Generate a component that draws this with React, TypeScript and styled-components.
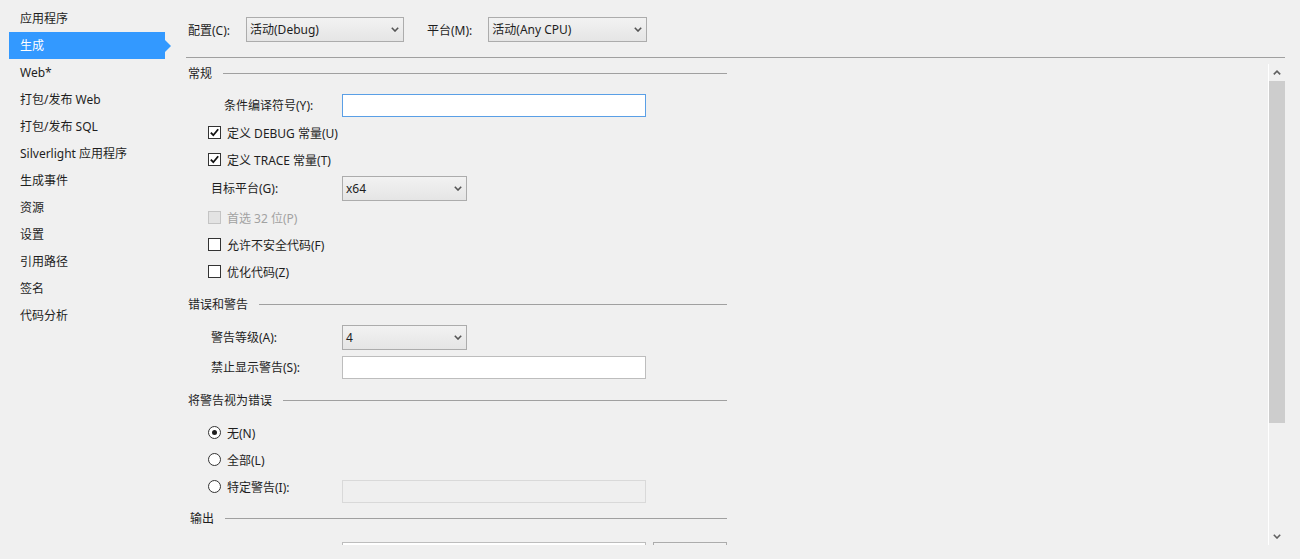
import React from 'react';
import styled, { createGlobalStyle, css } from 'styled-components';

const GlobalStyle = createGlobalStyle`
  html, body { margin: 0; padding: 0; background: #f0f0f0; }
  body {
    font-family: "Noto Sans", "Noto Sans CJK SC", sans-serif;
    font-size: 12px;
    color: #1e1e1e;
  }
  #root { height: 559px; }
`;

const Page = styled.div`
  display: flex;
  width: 1300px;
  height: 559px;
  overflow: hidden;
  background: #f0f0f0;
`;

const Sidebar = styled.nav`
  width: 186px;
  flex: none;
  box-sizing: border-box;
  padding: 5px 0 0 9px;
  display: flex;
  flex-direction: column;
`;

const NavItem = styled.div<{ $active?: boolean }>`
  position: relative;
  width: 156px;
  height: 27px;
  box-sizing: border-box;
  padding-left: 11px;
  display: flex;
  align-items: center;
  line-height: 16px;
  white-space: nowrap;
  ${(p) =>
    p.$active &&
    css`
      background: #3399ff;
      color: #fff;
      &::after {
        content: '';
        position: absolute;
        left: 100%;
        top: 50%;
        margin-top: -6px;
        border-left: 6px solid #3399ff;
        border-top: 6px solid transparent;
        border-bottom: 6px solid transparent;
      }
    `}
`;

const Main = styled.div`
  flex: 1;
  min-width: 0;
  display: flex;
  flex-direction: column;
  padding-right: 15px;
`;

const TopBar = styled.div`
  height: 57px;
  box-sizing: border-box;
  padding: 17px 0 0 2px;
  display: flex;
  align-items: flex-start;
  gap: 23px;
`;

const TopField = styled.label`
  display: flex;
  align-items: center;
  gap: 16px;
  height: 25px;
  white-space: nowrap;
`;

const Rule = styled.div`
  height: 1px;
  background: #a0a0a0;
  flex: none;
`;

const ScrollArea = styled.div`
  margin-top: 6px;
  height: 481px;
  display: flex;
`;

const Content = styled.div`
  flex: 1;
  min-width: 0;
  overflow: hidden;
`;

const Section = styled.div`
  width: 541px;
  display: flex;
  flex-direction: column;
`;

const Header = styled.div<{ $mt: number; $indent?: number }>`
  display: flex;
  align-items: center;
  gap: 11px;
  height: 18px;
  margin-top: ${(p) => p.$mt}px;
  padding-left: ${(p) => p.$indent ?? 2}px;
  white-space: nowrap;
  &::after {
    content: '';
    flex: 1;
    height: 1px;
    background: #a0a0a0;
  }
`;

const Row = styled.div<{ $h: number; $mt: number; $top?: boolean }>`
  display: flex;
  align-items: ${(p) => (p.$top ? 'flex-start' : 'center')};
  height: ${(p) => p.$h}px;
  margin-top: ${(p) => p.$mt}px;
  white-space: nowrap;
`;

const FieldLabel = styled.div<{ $indent: number }>`
  width: 156px;
  box-sizing: border-box;
  padding-left: ${(p) => p.$indent}px;
  line-height: 16px;
  flex: none;
`;

const ChoiceLine = styled.label<{ $disabled?: boolean; $w?: number }>`
  display: flex;
  align-items: center;
  gap: 6px;
  padding-left: 22px;
  height: 27px;
  box-sizing: border-box;
  width: ${(p) => (p.$w ? `${p.$w}px` : 'auto')};
  flex: none;
  color: ${(p) => (p.$disabled ? '#a2a2a2' : '#1e1e1e')};
`;

const Box = styled.span<{ $disabled?: boolean }>`
  width: 13px;
  height: 13px;
  box-sizing: border-box;
  border: 1px solid ${(p) => (p.$disabled ? '#c4c4c4' : '#333')};
  background: ${(p) => (p.$disabled ? '#e3e3e3' : '#fff')};
  display: flex;
  align-items: center;
  justify-content: center;
  flex: none;
`;

const Radio = styled.span<{ $on?: boolean }>`
  width: 13px;
  height: 13px;
  box-sizing: border-box;
  border: 1px solid #333;
  border-radius: 50%;
  background: #fff;
  display: flex;
  align-items: center;
  justify-content: center;
  flex: none;
  &::after {
    content: '';
    width: 5px;
    height: 5px;
    border-radius: 50%;
    background: ${(p) => (p.$on ? '#1e1e1e' : 'transparent')};
  }
`;

const TextBox = styled.div<{ $w: number; $focus?: boolean; $disabled?: boolean; $mt?: number }>`
  width: ${(p) => p.$w}px;
  height: 23px;
  box-sizing: border-box;
  flex: none;
  margin-top: ${(p) => p.$mt ?? 0}px;
  border: 1px solid ${(p) => (p.$focus ? '#5a9fe6' : p.$disabled ? '#d9d9d9' : '#bdbdbd')};
  background: ${(p) => (p.$disabled ? '#efefef' : '#fff')};
`;

const Select = styled.div<{ $w: number }>`
  width: ${(p) => p.$w}px;
  height: 25px;
  box-sizing: border-box;
  flex: none;
  border: 1px solid #acacac;
  background: linear-gradient(#f2f2f2, #e5e5e5);
  display: flex;
  align-items: center;
  justify-content: space-between;
  padding: 0 4px 0 3px;
  line-height: 16px;
`;

const Btn = styled.div`
  width: 74px;
  height: 23px;
  box-sizing: border-box;
  margin-left: 7px;
  border: 1px solid #acacac;
  background: linear-gradient(#f2f2f2, #e5e5e5);
  flex: none;
`;

const Scrollbar = styled.div`
  width: 16px;
  flex: none;
  border-left: 1px solid #ffffff;
  display: flex;
  flex-direction: column;
`;

const ScrollBtn = styled.div`
  height: 17px;
  display: flex;
  align-items: center;
  justify-content: center;
  flex: none;
`;

const Thumb = styled.div`
  height: 342px;
  background: #cdcdcd;
  flex: none;
`;

const Track = styled.div`
  flex: 1;
`;

const Chevron = ({ up, color = '#555' }: { up?: boolean; color?: string }) => (
  <svg width="8" height="5" viewBox="0 0 8 5">
    <path
      d={up ? 'M0.8 4.4 L4 1.2 L7.2 4.4' : 'M0.8 0.8 L4 4 L7.2 0.8'}
      fill="none"
      stroke={color}
      strokeWidth="1.6"
    />
  </svg>
);

const Check = () => (
  <svg width="11" height="11" viewBox="0 0 11 11">
    <path d="M1.8 5.6 L4.3 8.2 L9.2 2.2" fill="none" stroke="#111" strokeWidth="1.8" />
  </svg>
);

const navItems = [
  '应用程序',
  '生成',
  'Web*',
  '打包/发布 Web',
  '打包/发布 SQL',
  'Silverlight 应用程序',
  '生成事件',
  '资源',
  '设置',
  '引用路径',
  '签名',
  '代码分析',
];

export default function App() {
  return (
    <>
      <GlobalStyle />
      <Page>
        <Sidebar>
          {navItems.map((n) => (
            <NavItem key={n} $active={n === '生成'}>
              {n}
            </NavItem>
          ))}
        </Sidebar>
        <Main>
          <TopBar>
            <TopField>
              配置(C):
              <Select $w={158}>
                活动(Debug)
                <Chevron />
              </Select>
            </TopField>
            <TopField>
              平台(M):
              <Select $w={159}>
                活动(Any CPU)
                <Chevron />
              </Select>
            </TopField>
          </TopBar>
          <Rule />
          <ScrollArea>
            <Content>
              <Section>
                <Header $mt={0}>常规</Header>
                <Row $h={23} $mt={12}>
                  <FieldLabel $indent={38}>条件编译符号(Y):</FieldLabel>
                  <TextBox $w={304} $focus />
                </Row>
                <Row $h={27} $mt={2}>
                  <ChoiceLine>
                    <Box>
                      <Check />
                    </Box>
                    定义 DEBUG 常量(U)
                  </ChoiceLine>
                </Row>
                <Row $h={27} $mt={0}>
                  <ChoiceLine>
                    <Box>
                      <Check />
                    </Box>
                    定义 TRACE 常量(T)
                  </ChoiceLine>
                </Row>
                <Row $h={25} $mt={3}>
                  <FieldLabel $indent={25}>目标平台(G):</FieldLabel>
                  <Select $w={125}>
                    x64
                    <Chevron />
                  </Select>
                </Row>
                <Row $h={27} $mt={3}>
                  <ChoiceLine $disabled>
                    <Box $disabled />
                    首选 32 位(P)
                  </ChoiceLine>
                </Row>
                <Row $h={27} $mt={0}>
                  <ChoiceLine>
                    <Box />
                    允许不安全代码(F)
                  </ChoiceLine>
                </Row>
                <Row $h={27} $mt={0}>
                  <ChoiceLine>
                    <Box />
                    优化代码(Z)
                  </ChoiceLine>
                </Row>
                <Header $mt={10}>错误和警告</Header>
                <Row $h={25} $mt={12}>
                  <FieldLabel $indent={25}>警告等级(A):</FieldLabel>
                  <Select $w={125}>
                    4
                    <Chevron />
                  </Select>
                </Row>
                <Row $h={23} $mt={6}>
                  <FieldLabel $indent={25}>禁止显示警告(S):</FieldLabel>
                  <TextBox $w={304} />
                </Row>
                <Header $mt={12}>将警告视为错误</Header>
                <Row $h={27} $mt={10}>
                  <ChoiceLine>
                    <Radio $on />
                    无(N)
                  </ChoiceLine>
                </Row>
                <Row $h={27} $mt={0}>
                  <ChoiceLine>
                    <Radio />
                    全部(L)
                  </ChoiceLine>
                </Row>
                <Row $h={30} $mt={0} $top>
                  <ChoiceLine $w={156}>
                    <Radio />
                    特定警告(I):
                  </ChoiceLine>
                  <TextBox $w={304} $disabled $mt={7} />
                </Row>
                <Header $mt={6} $indent={4}>输出</Header>
                <Row $h={23} $mt={15} $top>
                  <FieldLabel $indent={25} />
                  <TextBox $w={304} />
                  <Btn />
                </Row>
              </Section>
            </Content>
            <Scrollbar>
              <ScrollBtn>
                <Chevron up color="#606060" />
              </ScrollBtn>
              <Thumb />
              <Track />
              <ScrollBtn>
                <Chevron color="#606060" />
              </ScrollBtn>
            </Scrollbar>
          </ScrollArea>
        </Main>
      </Page>
    </>
  );
}
